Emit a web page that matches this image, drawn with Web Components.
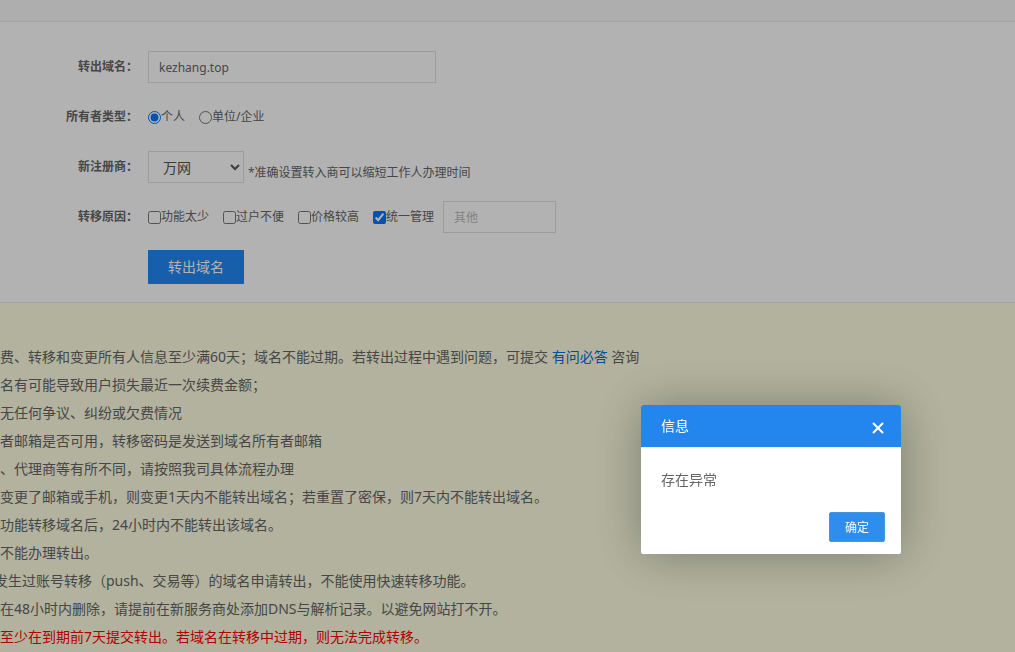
<!DOCTYPE html>
<html lang="zh-CN">
<head>
<meta charset="utf-8">
<meta name="viewport" content="width=device-width, initial-scale=1">
<title>转出域名</title>
<style>
  body {
    margin: 0;
    background: #fff;
    color: #666;
    font: 12px/20px "Noto Sans", "Noto Sans CJK SC", sans-serif;
  }
</style>
</head>
<body>
<transfer-page>
  <transfer-form></transfer-form>
  <notice-list slot="notice">
    <li>费、转移和变更所有人信息至少满60天；域名不能过期。若转出过程中遇到问题，可提交 <a href="#ask">有问必答</a> 咨询</li>
    <li>名有可能导致用户损失最近一次续费金额；</li>
    <li>无任何争议、纠纷或欠费情况</li>
    <li>者邮箱是否可用，转移密码是发送到域名所有者邮箱</li>
    <li>、代理商等有所不同，请按照我司具体流程办理</li>
    <li>变更了邮箱或手机，则变更1天内不能转出域名；若重置了密保，则7天内不能转出域名。</li>
    <li>功能转移域名后，24小时内不能转出该域名。</li>
    <li>不能办理转出。</li>
    <li class="outdent">发生过账号转移（push、交易等）的域名申请转出，不能使用快速转移功能。</li>
    <li>在48小时内删除，请提前在新服务商处添加DNS与解析记录。以避免网站打不开。</li>
    <li class="warn">至少在到期前7天提交转出。若域名在转移中过期，则无法完成转移。</li>
  </notice-list>
  <info-dialog slot="dialog" heading="信息">存在异常</info-dialog>
</transfer-page>

<script>
class TransferPage extends HTMLElement {
  constructor() {
    super();
    this.attachShadow({ mode: 'open' });
    this.shadowRoot.innerHTML = `
      <style>
        :host { display: flex; flex-direction: column; min-height: 100vh; overflow: hidden; }
        .top { height: 21px; background: #fafafa; border-bottom: 1px solid #ebebeb; }
        ::slotted(notice-list) { flex: 1; }
        .shade { position: fixed; inset: 0; background: rgba(0, 0, 0, .3); }
      </style>
      <div class="top"></div>
      <slot></slot>
      <slot name="notice"></slot>
      <div class="shade"></div>
      <slot name="dialog"></slot>
    `;
  }
}

class FormRow extends HTMLElement {
  constructor() {
    super();
    this.attachShadow({ mode: 'open' });
    this.shadowRoot.innerHTML = `
      <style>
        :host { display: flex; align-items: center; gap: 10px; height: 32px; }
        .name { flex: none; width: 138px; text-align: right; font-weight: bold; }
        .field { display: flex; align-items: center; gap: 9px; }
      </style>
      <div class="name"><slot name="label"></slot></div>
      <div class="field"><slot></slot></div>
    `;
  }
}

class TransferForm extends HTMLElement {
  constructor() {
    super();
    this.attachShadow({ mode: 'open' });
    this.shadowRoot.innerHTML = `
      <style>
        :host { display: block; }
        form { display: flex; flex-direction: column; gap: 18px; padding: 29px 0 19px; }
        input, select, button { box-sizing: border-box; margin: 0; font-family: inherit; }
        input[type=text], select {
          height: 32px;
          border: 1px solid #e0e0e0;
          border-radius: 0;
          background: #fff;
          color: #666;
        }
        input[type=text] { padding: 0 10px; font-size: 12px; }
        input::placeholder { color: #bbb; }
        #domain { width: 288px; }
        #other { width: 113px; }
        select { width: 96px; padding: 0 0 0 10px; font-size: 14px; color: #555; }
        .hint { align-self: flex-end; }
        .registrar { display: flex; gap: 4px; }
        .options { display: flex; gap: 14px; }
        .options label { display: flex; align-items: center; }
        .options input { width: 13px; height: 13px; }
        button {
          width: 96px;
          height: 34px;
          padding: 0 0 2px;
          border: 0;
          background: #2288f5;
          color: #fff;
          font-size: 14px;
        }
      </style>
      <form>
        <form-row>
          <label slot="label" for="domain">转出域名：</label>
          <input type="text" id="domain" value="kezhang.top">
        </form-row>
        <form-row>
          <span slot="label" id="owner">所有者类型：</span>
          <div class="options" role="radiogroup" aria-labelledby="owner">
            <label><input type="radio" name="owner" checked>个人</label>
            <label><input type="radio" name="owner">单位/企业</label>
          </div>
        </form-row>
        <form-row>
          <label slot="label" for="registrar">新注册商：</label>
          <div class="registrar">
            <select id="registrar"><option>万网</option></select>
            <span class="hint">*准确设置转入商可以缩短工作人办理时间</span>
          </div>
        </form-row>
        <form-row>
          <span slot="label" id="reason">转移原因：</span>
          <div class="options" role="group" aria-labelledby="reason">
            <label><input type="checkbox">功能太少</label>
            <label><input type="checkbox">过户不便</label>
            <label><input type="checkbox">价格较高</label>
            <label><input type="checkbox" checked>统一管理</label>
          </div>
          <input type="text" id="other" placeholder="其他" aria-label="其他">
        </form-row>
        <form-row>
          <button type="button">转出域名</button>
        </form-row>
      </form>
    `;
  }
}

class NoticeList extends HTMLElement {
  constructor() {
    super();
    this.attachShadow({ mode: 'open' });
    this.shadowRoot.innerHTML = `
      <style>
        :host { display: block; border-top: 1px solid #ebebeb; background: #ffffe3; }
        ul { margin: 0; padding: 40px 0 0; list-style: none; font-size: 14px; line-height: 28px; }
        ::slotted(li) { min-height: 28px; }
        ::slotted(.outdent) { text-indent: -6px; }
        ::slotted(.warn) { color: #f00; }
      </style>
      <ul><slot></slot></ul>
    `;
    // links sit inside slotted items, so they are coloured directly
    this.querySelectorAll('a').forEach((a) => {
      a.style.color = '#0070d8';
      a.style.textDecoration = 'none';
    });
  }
}

class InfoDialog extends HTMLElement {
  constructor() {
    super();
    this.attachShadow({ mode: 'open' });
    this.shadowRoot.innerHTML = `
      <style>
        :host {
          position: fixed;
          top: 405px;
          left: 641px;
          width: 260px;
          border-radius: 2px;
          background: #fff;
          box-shadow: 1px 1px 50px rgba(0, 0, 0, .3);
          font-size: 14px;
        }
        header {
          display: flex;
          align-items: center;
          justify-content: space-between;
          height: 42px;
          padding: 0 16px 0 20px;
          border-bottom: 1px solid #eee;
          border-radius: 2px 2px 0 0;
          background: #2286ee;
          background-clip: padding-box;
          color: #fff;
        }
        h2 { margin: 0; font-size: 14px; font-weight: normal; }
        button { margin: 0; font-family: inherit; color: #fff; }
        .close { display: flex; padding: 3px 0 0; border: 0; background: none; }
        .body { padding: 20px; line-height: 24px; }
        footer { display: flex; justify-content: flex-end; padding: 0 16px 12px; }
        .ok {
          height: 30px;
          padding: 0 15px;
          border: 1px solid #4898d5;
          border-radius: 2px;
          background: #2e8ded;
          font-size: 12px;
        }
      </style>
      <header>
        <h2></h2>
        <button class="close" type="button" aria-label="关闭">
          <svg width="14" height="14" viewBox="0 0 14 14" fill="none" stroke="#fff" stroke-width="2">
            <path d="M2 2L12 12M12 2L2 12"/>
          </svg>
        </button>
      </header>
      <div class="body"><slot></slot></div>
      <footer><button class="ok" type="button">确定</button></footer>
    `;
    this.shadowRoot.querySelector('h2').textContent = this.getAttribute('heading');
    this.shadowRoot.querySelectorAll('button').forEach((b) => {
      b.addEventListener('click', () => this.remove());
    });
  }
}

customElements.define('transfer-page', TransferPage);
customElements.define('form-row', FormRow);
customElements.define('transfer-form', TransferForm);
customElements.define('notice-list', NoticeList);
customElements.define('info-dialog', InfoDialog);
</script>
</body>
</html>
